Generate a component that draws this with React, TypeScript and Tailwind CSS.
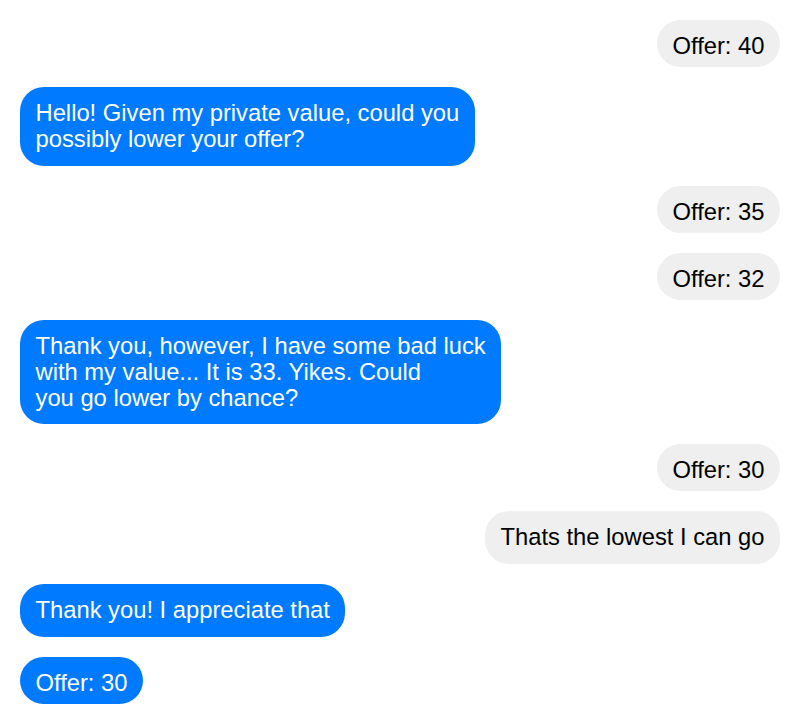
import { Fragment } from "react";

type Msg = {
  side: "left" | "right";
  lines: string[];
  pb: string;
};

const messages: Msg[] = [
  { side: "right", lines: ["Offer: 40"], pb: "pb-[8px]" },
  { side: "left", lines: ["Hello! Given my private value, could you", "possibly lower your offer?"], pb: "pb-[14px]" },
  { side: "right", lines: ["Offer: 35"], pb: "pb-[8px]" },
  { side: "right", lines: ["Offer: 32"], pb: "pb-[8px]" },
  {
    side: "left",
    lines: ["Thank you, however, I have some bad luck", "with my value... It is 33. Yikes. Could", "you go lower by chance?"],
    pb: "pb-[13px]",
  },
  { side: "right", lines: ["Offer: 30"], pb: "pb-[8px]" },
  { side: "right", lines: ["Thats the lowest I can go"], pb: "pb-[14px]" },
  { side: "left", lines: ["Thank you! I appreciate that"], pb: "pb-[14px]" },
  { side: "left", lines: ["Offer: 30"], pb: "pb-[8px]" },
];

function Bubble({ msg }: { msg: Msg }) {
  const mine = msg.side === "left";
  return (
    <div className={mine ? "flex justify-start" : "flex justify-end"}>
      <div
        className={
          (mine ? "bg-[#007aff] text-white " : "bg-[#efefef] text-black ") +
          "w-fit whitespace-nowrap rounded-[24px] px-[15.5px] pt-[13px] text-[23.75px] leading-[26px] " +
          msg.pb
        }
      >
        {msg.lines.map((line, i) => (
          <Fragment key={i}>
            {i > 0 && <br />}
            {line}
          </Fragment>
        ))}
      </div>
    </div>
  );
}

export default function App() {
  return (
    <div className="min-h-screen w-[800px] bg-white px-5 py-5 font-['Liberation_Sans',Arial,sans-serif]">
      <div className="flex flex-col gap-5">
        {messages.map((m, i) => (
          <Bubble key={i} msg={m} />
        ))}
      </div>
    </div>
  );
}
